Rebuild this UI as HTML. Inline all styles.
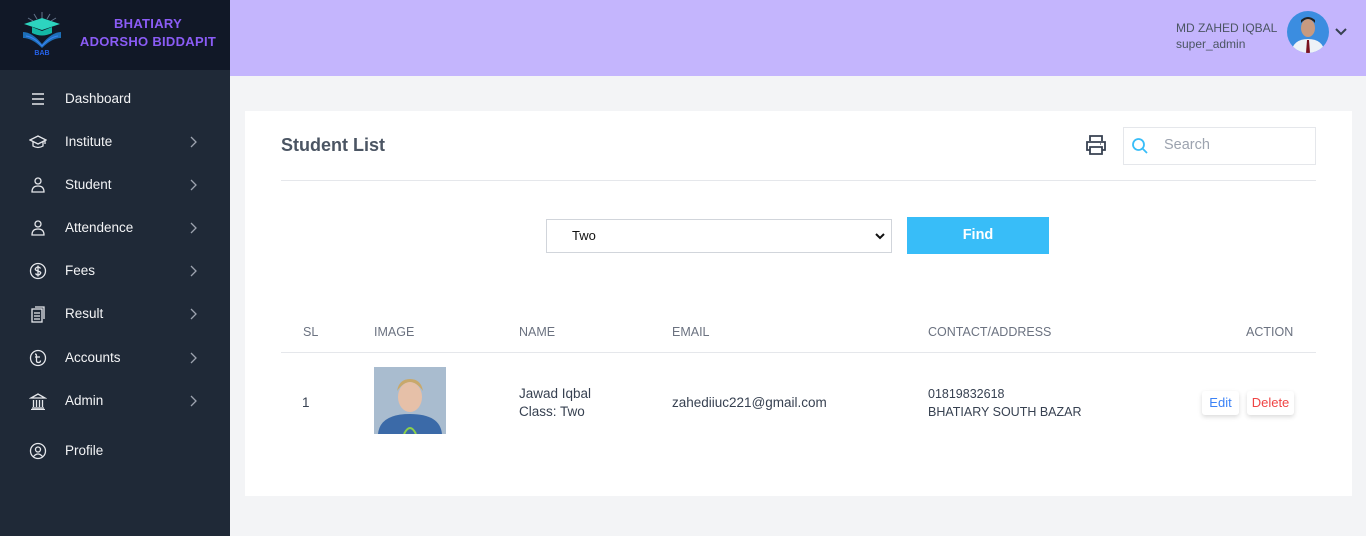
<!DOCTYPE html>
<html><head><meta charset="utf-8"><style>
*{box-sizing:border-box;margin:0;padding:0}
body{width:1366px;height:536px;overflow:hidden;background:#f3f4f6;font-family:"Liberation Sans",sans-serif;position:relative}
.a{position:absolute}
.side{left:0;top:0;width:230px;height:536px;background:#1f2937}
.logo{left:0;top:0;width:230px;height:70px;background:#111827}
.brand{left:70px;top:15px;width:156px;text-align:center;color:#8b5cf6;font-weight:bold;font-size:13px;line-height:18px;letter-spacing:.3px;white-space:nowrap}
.item{left:0;width:230px;height:20px;color:#f3f4f6;font-size:13.5px}
.item .t{position:absolute;left:65px;top:2px}
.item svg.i{position:absolute;left:29px;top:1px}
.item svg.c{position:absolute;left:188px;top:4px}
.top{left:230px;top:0;width:1136px;height:76px;background:#c4b5fd}
.card{left:245px;top:111px;width:1107px;height:385px;background:#fff}
.th{top:325px;font-size:12.5px;color:#6b7280}
.td{font-size:13.5px;color:#374151;line-height:18px}
</style></head><body>
<div class="a side"></div>
<div class="a logo"></div>
<svg class="a" style="left:20px;top:10px" width="44" height="46" viewBox="0 0 44 46">
<g stroke="#64748b" stroke-width="1"><line x1="22" y1="2" x2="22" y2="8"/><line x1="14" y1="4" x2="17" y2="9"/><line x1="30" y1="4" x2="27" y2="9"/><line x1="8" y1="8" x2="13" y2="11"/><line x1="36" y1="8" x2="31" y2="11"/></g>
<path d="M4 14 L22 8 L40 14 L22 20 Z" fill="#2dd4bf"/><path d="M12 17 V23 Q22 28 32 23 V17 L22 21 Z" fill="#14b8a6"/>
<path d="M3 22 Q12 22 22 34 Q32 22 41 22 V28 Q32 28 22 38 Q12 28 3 28Z" fill="#1d6fb8"/>
<path d="M6 26 Q14 27 22 36 Q30 27 38 26" stroke="#3b82f6" fill="none"/>
<text x="22" y="45" font-size="7" font-weight="bold" fill="#2563eb" text-anchor="middle" font-family="Liberation Sans">BAB</text></svg>
<div class="a brand">BHATIARY<br>ADORSHO BIDDAPIT</div>

<div class="a item" style="top:89px"><svg class="i" width="18" height="18" viewBox="0 0 18 18" stroke="#e5e7eb" stroke-width="1.6" fill="none"><path d="M3 4h12M3 9h12M3 14h12"/></svg><span class="t">Dashboard</span></div>
<div class="a item" style="top:132px"><svg class="i" width="18" height="18" viewBox="0 0 18 18" stroke="#e5e7eb" stroke-width="1.3" fill="none"><path d="M1 7l8-4 8 4-8 4z M4 8.5v4.5q5 3 10 0V8.5 M16 7v4"/></svg><span class="t">Institute</span><svg class="c" width="10" height="12" viewBox="0 0 10 12" stroke="#9ca3af" stroke-width="1.3" fill="none"><path d="M3 1l5 5-5 5"/></svg></div>
<div class="a item" style="top:175px"><svg class="i" width="18" height="18" viewBox="0 0 18 18" stroke="#e5e7eb" stroke-width="1.3" fill="none"><circle cx="9" cy="5" r="3"/><path d="M3 16q0-6 6-6t6 6z"/></svg><span class="t">Student</span><svg class="c" width="10" height="12" viewBox="0 0 10 12" stroke="#9ca3af" stroke-width="1.3" fill="none"><path d="M3 1l5 5-5 5"/></svg></div>
<div class="a item" style="top:218px"><svg class="i" width="18" height="18" viewBox="0 0 18 18" stroke="#e5e7eb" stroke-width="1.3" fill="none"><circle cx="9" cy="5" r="3"/><path d="M3 16q0-6 6-6t6 6z"/></svg><span class="t">Attendence</span><svg class="c" width="10" height="12" viewBox="0 0 10 12" stroke="#9ca3af" stroke-width="1.3" fill="none"><path d="M3 1l5 5-5 5"/></svg></div>
<div class="a item" style="top:261px"><svg class="i" width="18" height="18" viewBox="0 0 18 18" stroke="#e5e7eb" stroke-width="1.3" fill="none"><circle cx="9" cy="9" r="7.5"/><path d="M11.5 6.5q-1-1.5-2.5-1.5t-2.5 1.5 2.5 2.5 2.5 2.5-2.5 1.5-2.5-1.5M9 3.5v11"/></svg><span class="t">Fees</span><svg class="c" width="10" height="12" viewBox="0 0 10 12" stroke="#9ca3af" stroke-width="1.3" fill="none"><path d="M3 1l5 5-5 5"/></svg></div>
<div class="a item" style="top:304px"><svg class="i" width="18" height="18" viewBox="0 0 18 18" stroke="#e5e7eb" stroke-width="1.3" fill="none"><rect x="3" y="4" width="10" height="13"/><path d="M6 2h9v12M5 8h6M5 11h6M5 14h6"/></svg><span class="t">Result</span><svg class="c" width="10" height="12" viewBox="0 0 10 12" stroke="#9ca3af" stroke-width="1.3" fill="none"><path d="M3 1l5 5-5 5"/></svg></div>
<div class="a item" style="top:348px"><svg class="i" width="18" height="18" viewBox="0 0 18 18" stroke="#e5e7eb" stroke-width="1.3" fill="none"><circle cx="9" cy="9" r="7.5"/><path d="M6 5q1.5 0 1.5 2v5q0 1.5 2 1.5t2-2M6 8h5"/></svg><span class="t">Accounts</span><svg class="c" width="10" height="12" viewBox="0 0 10 12" stroke="#9ca3af" stroke-width="1.3" fill="none"><path d="M3 1l5 5-5 5"/></svg></div>
<div class="a item" style="top:391px"><svg class="i" width="18" height="18" viewBox="0 0 18 18" stroke="#e5e7eb" stroke-width="1.3" fill="none"><path d="M2 6l7-4 7 4zM3 16h12M2 17.5h14M4.5 8v7M7.5 8v7M10.5 8v7M13.5 8v7"/></svg><span class="t">Admin</span><svg class="c" width="10" height="12" viewBox="0 0 10 12" stroke="#9ca3af" stroke-width="1.3" fill="none"><path d="M3 1l5 5-5 5"/></svg></div>
<div class="a item" style="top:441px"><svg class="i" width="18" height="18" viewBox="0 0 18 18" stroke="#e5e7eb" stroke-width="1.3" fill="none"><circle cx="9" cy="9" r="7.5"/><circle cx="9" cy="7.5" r="2.5"/><path d="M4.5 14.5q4.5-5 9 0"/></svg><span class="t">Profile</span></div>

<div class="a top"></div>
<div class="a" style="left:1176px;top:21px;font-size:12px;color:#4b5563">MD ZAHED IQBAL</div>
<div class="a" style="left:1176px;top:37px;font-size:12px;color:#4b5563">super_admin</div>
<svg class="a" style="left:1287px;top:11px" width="42" height="42" viewBox="0 0 42 42"><defs><clipPath id="cp"><circle cx="21" cy="21" r="21"/></clipPath></defs><g clip-path="url(#cp)"><rect width="42" height="42" fill="#3b8de0"/><ellipse cx="21" cy="17" rx="7" ry="9" fill="#c79a80"/><path d="M14 12q7-8 14 0v-3q-7-6-14 0z" fill="#222"/><path d="M4 42q2-14 17-14t17 14z" fill="#eef2f7"/><path d="M20 29h2l1 13h-4z" fill="#7a1220"/></g></svg>
<svg class="a" style="left:1334px;top:27px" width="14" height="10" viewBox="0 0 14 10" stroke="#374151" stroke-width="2" fill="none"><path d="M2 2l5 5 5-5"/></svg>

<div class="a card"></div>
<div class="a" style="left:281px;top:135px;font-size:18px;font-weight:bold;color:#4b5563">Student List</div>
<div class="a" style="left:281px;top:180px;width:1035px;height:1px;background:#e5e7eb"></div>
<svg class="a" style="left:1084px;top:133px" width="24" height="24" viewBox="0 0 24 24" stroke="#374151" stroke-width="1.8" fill="none"><path d="M6 8V3h12v5M6 17H3V9h18v8h-3M6 14h12v7H6z"/><path d="M16 11h1" stroke-width="1.2"/></svg>
<div class="a" style="left:1123px;top:127px;width:193px;height:38px;border:1px solid #e5e7eb"></div>
<svg class="a" style="left:1131px;top:137px" width="18" height="18" viewBox="0 0 18 18" stroke="#38bdf8" stroke-width="1.8" fill="none"><circle cx="7.5" cy="7.5" r="5.5"/><path d="M11.5 11.5l4.5 4.5"/></svg>
<div class="a" style="left:1164px;top:137px;font-size:14.5px;color:#9ca3af">Search</div>

<div class="a" style="left:546px;top:219px;width:346px;height:34px;border:1px solid #d1d5db;background:#fff"></div>
<div class="a" style="left:572px;top:228px;font-size:13px;color:#111">Two</div>
<svg class="a" style="left:875px;top:232px" width="10" height="8" viewBox="0 0 10 8" stroke="#111" stroke-width="2" fill="none"><path d="M1 2l4 4 4-4"/></svg>
<div class="a" style="left:907px;top:217px;width:142px;height:37px;background:#38bdf8;color:#fff;font-weight:bold;font-size:14.5px;text-align:center;line-height:37px">Find</div>

<div class="a th" style="left:303px">SL</div>
<div class="a th" style="left:374px">IMAGE</div>
<div class="a th" style="left:519px">NAME</div>
<div class="a th" style="left:672px">EMAIL</div>
<div class="a th" style="left:928px">CONTACT/ADDRESS</div>
<div class="a th" style="left:1246px">ACTION</div>
<div class="a" style="left:281px;top:352px;width:1035px;height:1px;background:#e5e7eb"></div>

<div class="a td" style="left:302px;top:394px">1</div>
<svg class="a" style="left:374px;top:367px" width="72" height="71" viewBox="0 0 72 71"><rect width="72" height="67" fill="#a9bccf"/><path d="M4 67q2-20 32-20t32 20z" fill="#3b6aa8"/><ellipse cx="36" cy="30" rx="12" ry="15" fill="#e6c0a8"/><path d="M23 24q13-18 26 0q-2-12-13-12t-13 12z" fill="#c9a86a"/><path d="M30 67q6-12 12 0" stroke="#8bd14a" stroke-width="2" fill="none"/><rect y="67" width="72" height="4" fill="#fff"/></svg>
<div class="a td" style="left:519px;top:385px">Jawad Iqbal<br>Class: Two</div>
<div class="a td" style="left:672px;top:394px">zahediiuc221@gmail.com</div>
<div class="a td" style="left:928px;top:385px;font-size:12.5px">01819832618<br>BHATIARY SOUTH BAZAR</div>
<div class="a" style="left:1202px;top:391px;width:37px;height:24px;background:#fff;border-radius:3px;box-shadow:0 2px 5px rgba(0,0,0,.15);color:#3b82f6;font-size:13px;text-align:center;line-height:24px">Edit</div>
<div class="a" style="left:1247px;top:391px;width:47px;height:24px;background:#fff;border-radius:3px;box-shadow:0 2px 5px rgba(0,0,0,.15);color:#ef4444;font-size:13px;text-align:center;line-height:24px">Delete</div>
</body></html>
